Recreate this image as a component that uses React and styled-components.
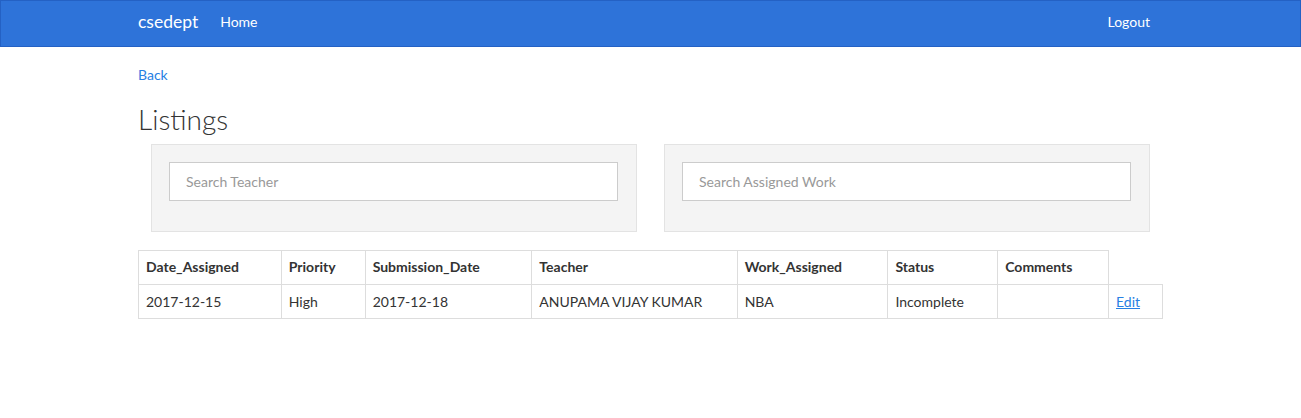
import React from "react";
import styled, { createGlobalStyle } from "styled-components";

const Global = createGlobalStyle`
  html, body { margin: 0; padding: 0; background: #fff; }
  body { font-family: "Source Sans Pro", Lato, "Liberation Sans", sans-serif; font-size: 14px; color: #333; }
  * { box-sizing: border-box; }
`;

const Navbar = styled.nav`
  height: 47px;
  background: #2e73d9;
  border: 1px solid #2461c4;
`;

const Container = styled.div`
  width: 1025px;
  margin: 0 auto;
`;

const NavInner = styled(Container)`
  display: flex;
  align-items: center;
  height: 100%;
  padding-bottom: 4px;
`;

const Brand = styled.a`
  color: #fff;
  font-size: 17.5px;
  text-decoration: none;
  margin-right: 22px;
`;

const NavLink = styled.a`
  color: #fff;
  font-size: 14px;
  text-decoration: none;
  margin-left: ${(p) => (p.$right ? "auto" : "0")};
  margin-right: ${(p) => (p.$right ? "13px" : "0")};
`;

const Back = styled.a`
  display: inline-block;
  margin-top: 18px;
  color: #2780e3;
  font-size: 14px;
  line-height: 20px;
  text-decoration: none;
`;

const Title = styled.h1`
  margin: 17px 0 0;
  font-size: 28px;
  font-weight: 300;
  line-height: 34px;
  color: #333;
`;

const SearchRow = styled.div`
  display: grid;
  grid-template-columns: 486px 486px;
  column-gap: 27px;
  padding-left: 13px;
  margin-top: 8px;
`;

const Well = styled.div`
  height: 88px;
  background: #f4f4f4;
  border: 1px solid #e3e3e3;
  padding: 17px 18px 0 17px;
`;

const Input = styled.input`
  width: 100%;
  height: 39px;
  border: 1px solid #cccccc;
  background: #fff;
  padding: 0 16px;
  font-family: inherit;
  font-size: 14px;
  color: #333;
  outline: none;
  &::placeholder { color: #999; }
`;

const Table = styled.table`
  margin-top: 18px;
  border-collapse: collapse;
  font-size: 14px;
`;

const Th = styled.th`
  border: 1px solid #dddddd;
  text-align: left;
  font-weight: 700;
  height: 34px;
  padding: 0 7px 2px;
  color: #333;
`;

const Td = styled.td`
  border: 1px solid #dddddd;
  height: 34px;
  padding: 0 7px;
  color: #333;
`;

const EditLink = styled.a`
  color: #2780e3;
  text-decoration: underline;
`;

const cols = [143, 84, 167, 206, 151, 110, 111, 54];
const heads = ["Date_Assigned", "Priority", "Submission_Date", "Teacher", "Work_Assigned", "Status", "Comments"];
const row = ["2017-12-15", "High", "2017-12-18", "ANUPAMA VIJAY KUMAR", "NBA", "Incomplete", ""];

export default function App() {
  return (
    <>
      <Global />
      <Navbar>
        <NavInner>
          <Brand href="#">csedept</Brand>
          <NavLink href="#">Home</NavLink>
          <NavLink href="#" $right>Logout</NavLink>
        </NavInner>
      </Navbar>
      <Container>
        <Back href="#">Back</Back>
        <Title>Listings</Title>
        <SearchRow>
          <Well><Input placeholder="Search Teacher" /></Well>
          <Well><Input placeholder="Search Assigned Work" /></Well>
        </SearchRow>
        <Table>
          <colgroup>
            {cols.map((w, i) => <col key={i} style={{ width: w }} />)}
          </colgroup>
          <thead>
            <tr>{heads.map((h) => <Th key={h}>{h}</Th>)}</tr>
          </thead>
          <tbody>
            <tr>
              {row.map((c, i) => <Td key={i}>{c}</Td>)}
              <Td><EditLink href="#">Edit</EditLink></Td>
            </tr>
          </tbody>
        </Table>
      </Container>
    </>
  );
}
